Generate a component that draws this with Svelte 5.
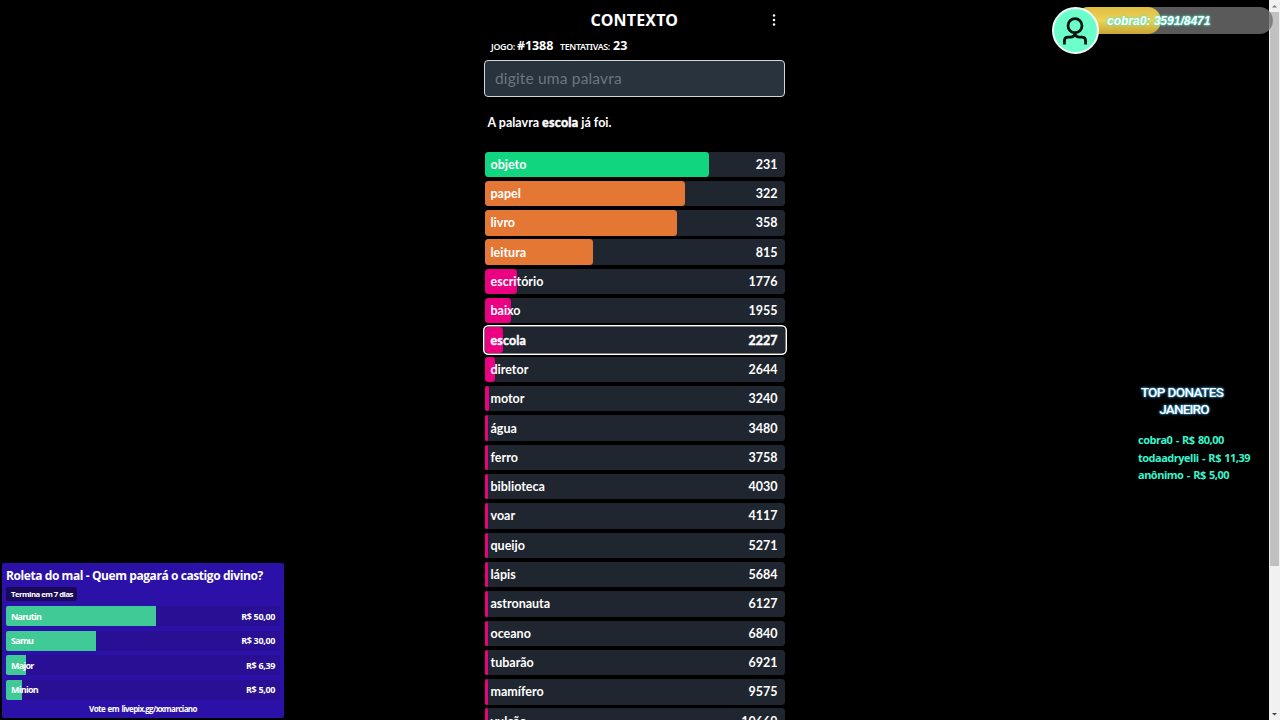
<script lang="ts">
	type Guess = { word: string; rank: number; width: number; color: string };

	const green = '#12d580';
	const orange = '#e57734';
	const pink = '#eb0082';

	const current = 'escola';

	const guesses: Guess[] = [
		{ word: 'objeto', rank: 231, width: 224.5, color: green },
		{ word: 'papel', rank: 322, width: 200.5, color: orange },
		{ word: 'livro', rank: 358, width: 192, color: orange },
		{ word: 'leitura', rank: 815, width: 108, color: orange },
		{ word: 'escritório', rank: 1776, width: 32, color: pink },
		{ word: 'baixo', rank: 1955, width: 26, color: pink },
		{ word: 'escola', rank: 2227, width: 18, color: pink },
		{ word: 'diretor', rank: 2644, width: 10.5, color: pink },
		{ word: 'motor', rank: 3240, width: 4.5, color: pink },
		{ word: 'água', rank: 3480, width: 3, color: pink },
		{ word: 'ferro', rank: 3758, width: 3, color: pink },
		{ word: 'biblioteca', rank: 4030, width: 3, color: pink },
		{ word: 'voar', rank: 4117, width: 3, color: pink },
		{ word: 'queijo', rank: 5271, width: 3, color: pink },
		{ word: 'lápis', rank: 5684, width: 3, color: pink },
		{ word: 'astronauta', rank: 6127, width: 3, color: pink },
		{ word: 'oceano', rank: 6840, width: 3, color: pink },
		{ word: 'tubarão', rank: 6921, width: 3, color: pink },
		{ word: 'mamífero', rank: 9575, width: 3, color: pink },
		{ word: 'vulcão', rank: 10669, width: 3, color: pink }
	];

	const votes = [
		{ name: 'Narutin', value: 'R$ 50,00', width: 149.5 },
		{ name: 'Samu', value: 'R$ 30,00', width: 90 },
		{ name: 'Major', value: 'R$ 6,39', width: 19.5 },
		{ name: 'Minion', value: 'R$ 5,00', width: 15.5 }
	];

	const donates = ['cobra0 - R$ 80,00', 'todaadryelli - R$ 11,39', 'anônimo - R$ 5,00'];
</script>

<div class="screen">
	<main class="game">
		<header class="top">
			<h1>CONTEXTO</h1>
			<svg class="menu" width="4" height="12" viewBox="0 0 4 12" fill="#fff">
				<circle cx="2" cy="1.6" r="1.25" />
				<circle cx="2" cy="6" r="1.25" />
				<circle cx="2" cy="10.4" r="1.25" />
			</svg>
		</header>
		<div class="info">
			<span class="label">JOGO:</span>
			<b class="number">#1388</b>
			<span class="label tries">TENTATIVAS:</span>
			<b>23</b>
		</div>
		<input class="word" type="text" placeholder="digite uma palavra" />
		<p class="message">A palavra <b>escola</b> já foi.</p>
		<div class="rows">
			{#each guesses as guess}
				<div class="row" class:current={guess.word === current}>
					<div class="bar" style="width: {guess.width}px; background: {guess.color}"></div>
					<span class="guess">{guess.word}</span>
					<span class="rank">{guess.rank}</span>
				</div>
			{/each}
		</div>
	</main>

	<div class="scrollbar">
		<svg width="11" height="12" viewBox="0 0 11 12"><path d="M3 7.5h5L5.5 5z" fill="#777" /></svg>
		<div class="thumb"></div>
		<svg class="down" width="11" height="12" viewBox="0 0 11 12"
			><path d="M3 5h5L5.5 7.5z" fill="#444" /></svg
		>
	</div>

	<section class="goal">
		<div class="goalTrack">
			<div class="goalFill"></div>
			<span class="goalText">cobra0: 3591/8471</span>
		</div>
		<div class="avatar">
			<svg width="26" height="28" viewBox="0 0 26 28" fill="none" stroke="#08130f" stroke-width="2.8">
				<circle cx="13" cy="8.7" r="7" />
				<path d="M2.4 27.5v-3.5q0-3.800 3.800-3.800h2q4.800 0 4.800-4.600q0 4.600 4.800 4.600h2q3.800 0 3.800 3.800v3.500" />
			</svg>
		</div>
	</section>

	<section class="donates">
		<h2><span class="line1">TOP DONATES</span><span class="line2">JANEIRO</span></h2>
		{#each donates as donate}
			<div class="donate">{donate}</div>
		{/each}
	</section>

	<section class="poll">
		<h3>Roleta do mal - Quem pagará o castigo divino?</h3>
		<div class="ends">Termina em 7 dias</div>
		{#each votes as vote}
			<div class="vote">
				<div class="voteBar" style="width: {vote.width}px"></div>
				<span class="name">{vote.name}</span>
				<span class="value">{vote.value}</span>
			</div>
		{/each}
		<div class="link">Vote em livepix.gg/xxmarciano</div>
	</section>
</div>

<style>
	:global(body) {
		background: #000;
		overflow: hidden;
	}
	.screen {
		position: relative;
		display: flex;
		width: 1280px;
		height: 720px;
		overflow: hidden;
		background: #000;
		color: #fff;
		font-family: Lato, 'Noto Sans', sans-serif;
	}
	.game {
		width: 300px;
		margin-left: 484.5px;
	}
	.top {
		display: grid;
		grid-template-columns: 1fr 88px 1fr;
		align-items: center;
		height: 24px;
		padding-top: 8px;
	}
	h1 {
		grid-column: 2;
		margin: 0;
		font-family: 'Noto Sans', sans-serif;
		font-size: 16px;
		line-height: 24px;
		font-weight: 700;
		white-space: nowrap;
		letter-spacing: 0.2px;
	}
	.menu {
		justify-self: end;
		margin-right: 9px;
	}
	.info {
		display: flex;
		align-items: baseline;
		height: 20px;
		margin-top: 4px;
		padding-left: 6.5px;
		font-family: 'Noto Sans', sans-serif;
		font-size: 12.5px;
		line-height: 20px;
	}
	.label {
		width: 26px;
		font-size: 8.8px;
		font-weight: 600;
		white-space: nowrap;
		letter-spacing: -0.3px;
	}
	.number {
		width: 43px;
		letter-spacing: -0.1px;
	}
	.tries {
		width: 53px;
	}
	.word {
		display: block;
		box-sizing: border-box;
		width: 301px;
		height: 37px;
		margin: 4px 0 0 -0.5px;
		padding: 0 10px 2px;
		border: 1px solid #d4d7da;
		border-radius: 4px;
		background: #29333e;
		color: #fff;
		font-family: inherit;
		font-size: 15.5px;
		letter-spacing: 0.17px;
		outline: none;
	}
	.word::placeholder {
		color: #6d757e;
		opacity: 1;
	}
	.message {
		margin: 16px 0 18.5px 3px;
		height: 20px;
		font-size: 12.5px;
		line-height: 20px;
		font-weight: 700;
	}
	.message b {
		letter-spacing: 0.2px;
		-webkit-text-stroke: 0.4px #fff;
	}
	.rows {
		display: flex;
		flex-direction: column;
		gap: 3.93px;
	}
	.row {
		position: relative;
		display: flex;
		flex: none;
		justify-content: space-between;
		align-items: center;
		box-sizing: border-box;
		height: 25.4px;
		padding: 0 7px 0 6px;
		border-radius: 3.5px;
		background: #1f2630;
		font-size: 12.5px;
		font-weight: 700;
	}
	.row.current {
		-webkit-text-stroke: 0.4px #fff;
		box-shadow:
			0 0 0 0.5px #000,
			0 0 0 2px #fff;
	}
	.current .guess {
		letter-spacing: 0.15px;
	}
	.bar {
		position: absolute;
		inset: 0 auto 0 0;
		border-radius: 3.5px;
	}
	.guess,
	.rank {
		position: relative;
	}
	.scrollbar {
		display: flex;
		flex-direction: column;
		width: 11px;
		margin-left: auto;
		background: #f1f1f1;
	}
	.thumb {
		width: 9px;
		height: 554px;
		margin-left: 1px;
		background: #c1c1c1;
	}
	.down {
		margin-top: auto;
	}
	.goal {
		position: absolute;
		top: 7px;
		left: 1051px;
		width: 222px;
		height: 48px;
	}
	.goalTrack {
		position: relative;
		height: 27px;
		margin-left: 24px;
		border-radius: 14px;
		background: rgba(112, 112, 112, 0.8);
	}
	.goalFill {
		width: 86px;
		height: 27px;
		border-radius: 14px;
		background: linear-gradient(#dfbd45, #edd353 50%, #c5a535);
	}
	.goalText {
		position: absolute;
		top: 0;
		left: 32px;
		font-family: 'Liberation Sans', sans-serif;
		font-size: 12px;
		line-height: 28px;
		font-style: italic;
		font-weight: 700;
		white-space: nowrap;
		text-shadow:
			0 0 2px #4fe9cf,
			0 0 3px #4fe9cf;
	}
	.avatar {
		position: absolute;
		top: 0;
		left: 0.5px;
		display: flex;
		justify-content: center;
		align-items: center;
		box-sizing: border-box;
		width: 47px;
		height: 47px;
		border: 2px solid #f5fffb;
		border-radius: 50%;
		background: #6cffcb;
	}
	.donates {
		position: absolute;
		top: 384px;
		left: 1138px;
		width: 120px;
		font-family: 'Open Sans', sans-serif;
	}
	h2 {
		display: flex;
		flex-direction: column;
		width: 88px;
		margin: 0 0 14px;
		font-family: Roboto, sans-serif;
		font-size: 13.5px;
		line-height: 16.5px;
		font-weight: 500;
		text-align: center;
		white-space: nowrap;
		text-shadow:
			0 0 2px #3aa9e8,
			0 0 3px #3aa9e8;
	}
	.line1 {
		letter-spacing: -0.6px;
	}
	.line2 {
		margin-left: 4px;
		letter-spacing: -0.8px;
	}
	.donate {
		height: 17.5px;
		color: #38f5cd;
		font-size: 11px;
		line-height: 17.5px;
		font-weight: 700;
		white-space: nowrap;
		letter-spacing: -0.5px;
		word-spacing: 1px;
	}
	.poll {
		position: absolute;
		top: 563px;
		left: 2px;
		box-sizing: border-box;
		width: 282px;
		height: 155px;
		padding: 4px 4px 0;
		border-radius: 2px;
		background: #2b11a8;
		font-family: 'Open Sans', sans-serif;
	}
	h3 {
		margin: 0;
		font-size: 12px;
		line-height: 18px;
		font-weight: 700;
		white-space: nowrap;
		letter-spacing: -0.42px;
	}
	.ends {
		width: 71px;
		height: 14px;
		margin: 2px 0 5px;
		box-sizing: border-box;
		padding-left: 5px;
		border-radius: 2px;
		background: #190956;
		font-size: 7.8px;
		line-height: 14px;
		font-weight: 700;
		white-space: nowrap;
		letter-spacing: -0.55px;
	}
	.vote {
		position: relative;
		display: flex;
		justify-content: space-between;
		align-items: center;
		box-sizing: border-box;
		height: 20px;
		margin-bottom: 4.5px;
		padding: 0 5px;
		border-radius: 2px;
		background: #280f94;
		font-size: 9px;
		font-weight: 700;
		letter-spacing: -0.35px;
	}
	.voteBar {
		position: absolute;
		inset: 0 auto 0 0;
		border-radius: 2px 0 0 2px;
		background: #40cb96;
	}
	.name {
		position: relative;
		letter-spacing: -0.75px;
	}
	.value {
		position: relative;
	}
	.link {
		font-size: 8px;
		line-height: 10px;
		font-weight: 700;
		text-align: center;
		letter-spacing: -0.6px;
		word-spacing: 1px;
	}
</style>
